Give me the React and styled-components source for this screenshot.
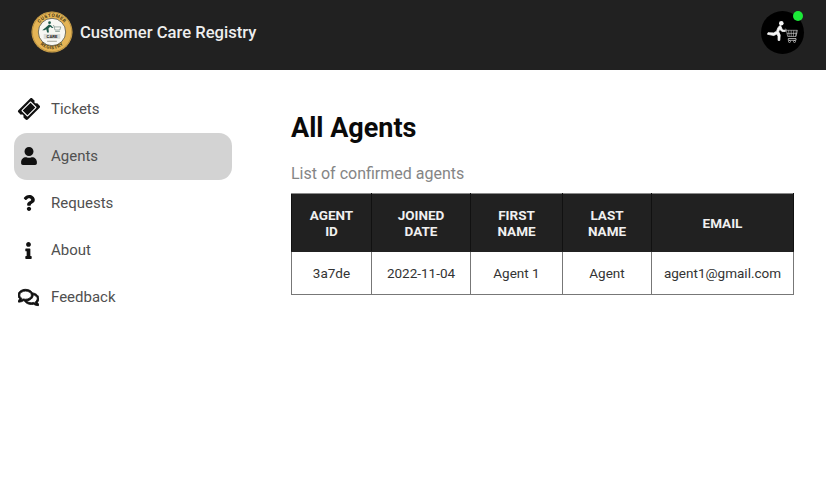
import React from 'react'
import styled, { createGlobalStyle } from 'styled-components'
import { FaTicketAlt, FaUser, FaQuestion, FaInfo, FaRegComments } from 'react-icons/fa'

const GlobalStyle = createGlobalStyle`
  html, body {
    margin: 0;
    padding: 0;
    background: #fff;
    font-family: Roboto, "Liberation Sans", sans-serif;
  }
`

const Header = styled.header`
  height: 70px;
  background: #212121;
  display: flex;
  align-items: center;
  justify-content: space-between;
  padding: 0 22px 6px 31px;
  box-sizing: border-box;
`

const Brand = styled.div`
  display: flex;
  align-items: center;
  gap: 7px;
  color: #eeeeee;
  font-size: 16.6px;
  font-weight: 500;
`

const Avatar = styled.div`
  position: relative;
  width: 43px;
  height: 43px;
  border-radius: 50%;
  background: #000;
  display: flex;
`

const StatusDot = styled.span`
  position: absolute;
  top: 0;
  right: 1px;
  width: 10px;
  height: 10px;
  border-radius: 50%;
  background: #1bea38;
`

const Body = styled.div`
  display: flex;
`

const Sidebar = styled.nav`
  width: 218px;
  margin: 16px 0 0 14px;
  display: flex;
  flex-direction: column;
`

const NavItem = styled.div`
  height: 47px;
  padding-bottom: 1px;
  box-sizing: border-box;
  display: flex;
  align-items: center;
  border-radius: 13px;
  background: ${({ $active }) => ($active ? '#d3d3d3' : 'transparent')};
  color: #505050;
  font-size: 15px;
  font-weight: 400;
`

const NavIcon = styled.span`
  width: 37px;
  padding-right: 8px;
  box-sizing: border-box;
  display: flex;
  justify-content: center;
  color: #111;
  font-size: ${({ $size }) => $size || 18}px;
  & svg {
    transform: ${({ $rotate }) => ($rotate ? `rotate(${$rotate}deg)` : 'none')};
    stroke-width: ${({ $bold }) => $bold || 0}px;
  }
`

const Main = styled.main`
  margin-left: 59px;
  padding-top: 41px;
`

const Title = styled.h1`
  margin: 0;
  font-size: 27px;
  line-height: 34px;
  font-weight: 700;
  color: #0a0a0a;
`

const Subtitle = styled.p`
  margin: 17px 0 7px;
  font-size: 16px;
  line-height: 24px;
  color: #858585;
`

const Table = styled.table`
  width: 502px;
  table-layout: fixed;
  border-collapse: collapse;
  border: 1px solid #8a8a8a;
`

const HeadCell = styled.th`
  width: ${({ $w }) => $w}px;
  height: 58px;
  padding: 0 8px;
  box-sizing: border-box;
  background: #212121;
  border: 1px solid #111;
  border-color: #8a8a8a #111 #212121;
  color: #f0f0f0;
  font-size: 13.5px;
  line-height: 16px;
  font-weight: 700;
  text-align: center;
`

const Cell = styled.td`
  height: 42px;
  padding: 0;
  border: 1px solid #777;
  color: #333;
  font-size: 13.5px;
  text-align: center;
`

const Logo = () => (
  <svg width="42" height="42" viewBox="0 0 43 43">
    <defs>
      <path id="topArc" d="M6 21.500a15.500 15.500 0 0 1 31 0" />
      <path id="botArc" d="M4.500 22a17 17 0 0 0 34 0" />
    </defs>
    <circle cx="21.500" cy="21.500" r="21" fill="#e5b556" />
    <circle cx="21.500" cy="21.500" r="20.200" fill="none" stroke="#8a6a2a" strokeWidth="0.5" />
    <circle cx="21.500" cy="21.500" r="14" fill="#f7f7f2" stroke="#3a3a2a" strokeWidth="0.7" />
    <text fontSize="4.800" fontWeight="700" fill="#4a3a14" fontFamily="Roboto, sans-serif" letterSpacing="0.5">
      <textPath href="#topArc" startOffset="50%" textAnchor="middle">CUSTOMER</textPath>
    </text>
    <text fontSize="4.800" fontWeight="700" fill="#4a3a14" fontFamily="Roboto, sans-serif" letterSpacing="0.5">
      <textPath href="#botArc" startOffset="50%" textAnchor="middle">REGISTRY</textPath>
    </text>
    <circle cx="19" cy="12" r="1.400" fill="#1e5a4a" />
    <path d="M18.500 13.800l-3.500 3-3.500 3h2.300l1.900-1.200.8 3.400h1.800l-.4-4 1.800-1.800 1.800 1.300h1.500l-2.600-3z" fill="#1e5a4a" />
    <path d="M22.500 15h1l1 4.500h5l1-3.200h-6.500M24.800 21h4.700" fill="none" stroke="#5c7a72" strokeWidth="0.6" />
    <rect x="13" y="23.500" width="17" height="5" fill="#d9dbd6" />
    <text x="21.500" y="27.700" fontSize="4.400" fontWeight="700" fill="#222" textAnchor="middle" fontFamily="Roboto, sans-serif">CARE</text>
    <rect x="16.500" y="30.500" width="10" height="1" fill="#a5a598" />
  </svg>
)

const RunnerCart = () => (
  <svg width="43" height="43" viewBox="0 0 43 43">
    <circle cx="20.300" cy="12.300" r="2.300" fill="#f6f6f6" />
    <path
      d="M19.500 14.200c-1.900.8-3.200 3.400-3.800 6l-3.100 1.700-5.600-.2-.5 1.600 6.300 1.200 3.100-1.500 1.100 2.200.1 4.200h1.700l.4-5.300-1.500-3.300.9-2.500 2.500 2.100h3.300v-1.100l-2.900-.3-1.500-3.600c-.2-.6-.3-.9-.5-1.200z"
      fill="#f6f6f6"
      stroke="#f6f6f6"
      strokeWidth="0.8"
      strokeLinejoin="round"
    />
    <path
      d="M23.800 18.200h1.300l1.600 7.300h8.300M25.400 19.300h11l-1.300 6.200M27.600 19.300l.6 6.200M30.200 19.300v6.200M32.800 19.300l-.5 6.200M35.300 19.300l-.7 6.200M26 22.400h10"
      fill="none"
      stroke="#d4d4d4"
      strokeWidth="0.6"
    />
    <path d="M27.300 27.500h7.700v1.800h-7.700z" fill="none" stroke="#e6e6e6" strokeWidth="0.7" />
    <circle cx="28.500" cy="30.500" r="1" fill="none" stroke="#e6e6e6" strokeWidth="0.6" />
    <circle cx="33.500" cy="30.500" r="1" fill="none" stroke="#e6e6e6" strokeWidth="0.6" />
  </svg>
)

const navItems = [
  { label: 'Tickets', icon: <FaTicketAlt />, size: 20, rotate: -45 },
  { label: 'Agents', icon: <FaUser />, size: 18, active: true },
  { label: 'Requests', icon: <FaQuestion />, size: 16 },
  { label: 'About', icon: <FaInfo />, size: 17 },
  { label: 'Feedback', icon: <FaRegComments />, size: 21, bold: 24 },
]

const columns = [
  { label: ['AGENT', 'ID'], w: 80 },
  { label: ['JOINED', 'DATE'], w: 99 },
  { label: ['FIRST', 'NAME'], w: 92 },
  { label: ['LAST', 'NAME'], w: 89 },
  { label: ['EMAIL'], w: 142 },
]

const row = ['3a7de', '2022-11-04', 'Agent 1', 'Agent', 'agent1@gmail.com']

export default function App() {
  return (
    <>
      <GlobalStyle />
      <Header>
        <Brand>
          <Logo />
          Customer Care Registry
        </Brand>
        <Avatar>
          <RunnerCart />
          <StatusDot />
        </Avatar>
      </Header>
      <Body>
        <Sidebar>
          {navItems.map((item) => (
            <NavItem key={item.label} $active={item.active}>
              <NavIcon $size={item.size} $rotate={item.rotate} $bold={item.bold}>
                {item.icon}
              </NavIcon>
              {item.label}
            </NavItem>
          ))}
        </Sidebar>
        <Main>
          <Title>All Agents</Title>
          <Subtitle>List of confirmed agents</Subtitle>
          <Table>
            <thead>
              <tr>
                {columns.map((col) => (
                  <HeadCell key={col.label.join()} $w={col.w}>
                    {col.label.map((line, i) => (
                      <React.Fragment key={line}>
                        {i > 0 && <br />}
                        {line}
                      </React.Fragment>
                    ))}
                  </HeadCell>
                ))}
              </tr>
            </thead>
            <tbody>
              <tr>
                {row.map((value) => (
                  <Cell key={value}>{value}</Cell>
                ))}
              </tr>
            </tbody>
          </Table>
        </Main>
      </Body>
    </>
  )
}
